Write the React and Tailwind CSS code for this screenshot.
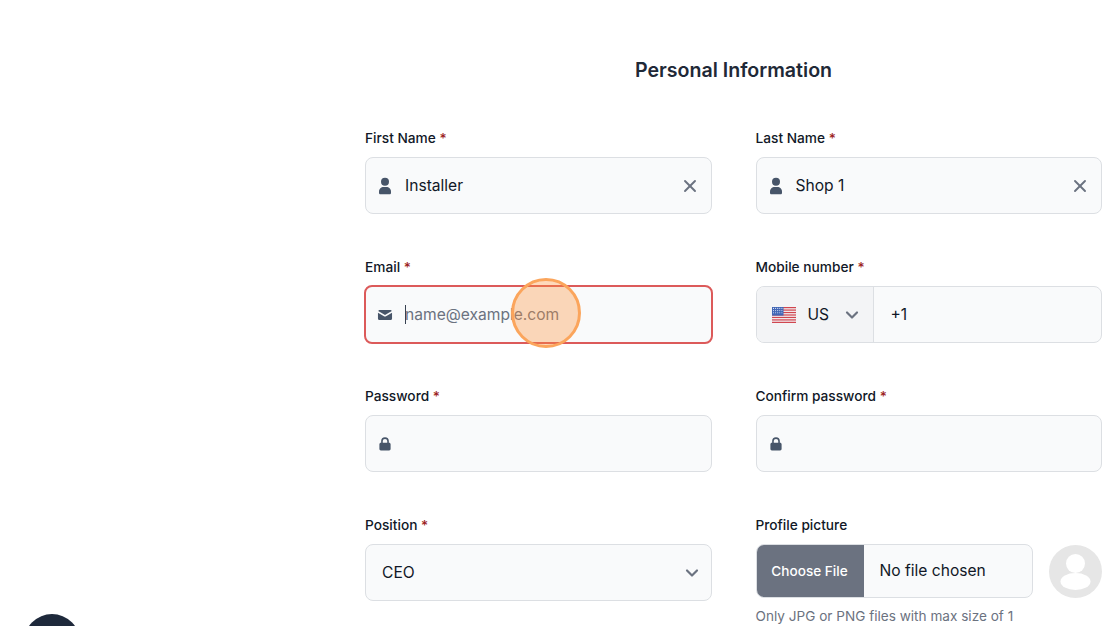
import React from 'react';
import { X, ChevronDown } from 'lucide-react';

const UserIcon = () => (
  <svg viewBox="0 0 20 20" className="w-[20px] h-[20px] fill-[#475569]">
    <path d="M10 1.8a4 4 0 1 0 0 8 4 4 0 0 0 0-8Z" />
    <path d="M8.6 11h2.8c2.5 0 4.6 2 4.6 4.5v1.400c0 .8-.7 1.300-1.400 1.300H5.400c-.7 0-1.400-.5-1.400-1.300v-1.400C4 13 6.100 11 8.600 11Z" />
  </svg>
);

const MailIcon = () => (
  <svg viewBox="0 0 20 20" className="w-[16px] h-[16px] fill-[#475569]">
    <path d="M3.6 3.6h12.8c1 0 1.8.6 2.1 1.4L10 9.9 1.5 5c.3-.8 1.1-1.4 2.1-1.4Z" />
    <path d="M1.2 7.2v7.2c0 1.1.9 2 2 2h13.6c1.1 0 2-.9 2-2V7.2l-8.1 4.6c-.4.2-1 .2-1.4 0L1.2 7.2Z" />
  </svg>
);

const LockIcon = () => (
  <svg viewBox="0 0 20 20" className="w-[16px] h-[16px] fill-[#475569]">
    <path d="M10 1.6a4.8 4.8 0 0 0-4.8 4.8v2h-.4c-1 0-1.8.8-1.8 1.8v6.2c0 1 .8 1.8 1.8 1.8h10.400c1 0 1.800-.8 1.800-1.800v-6.200c0-1-.8-1.800-1.800-1.800h-.4v-2A4.800 4.800 0 0 0 10 1.600Zm2.800 6.800H7.200v-2a2.800 2.800 0 0 1 5.600 0v2Z" />
  </svg>
);

const UsFlag = () => (
  <svg viewBox="0 0 24 16" className="w-[24px] h-[16px] shrink-0">
    <rect width="24" height="16" fill="#f3f4f6" />
    {[0, 2.46, 4.92, 7.38, 9.84, 12.3, 14.76].map((y) => (
      <rect key={y} y={y} width="24" height="1.23" fill="#d0454f" />
    ))}
    <rect width="11.5" height="8.6" fill="#4166b5" />
    {[1.4, 3.6, 5.8].map((y) =>
      [1.5, 3.6, 5.7, 7.8, 9.9].map((x) => (
        <circle key={`${x}-${y}`} cx={x} cy={y} r="0.55" fill="#dbe4f5" />
      ))
    )}
  </svg>
);

const Label = ({ text, required = true }) => (
  <label className="block h-[19px] mb-[9px] text-[13.7px] leading-[19px] font-medium text-[#111827]">
    {text}
    {required && <span className="text-[#9b1c1c]"> *</span>}
  </label>
);

const IconInput = ({ icon, value, placeholder, clearable, error, caret }) => (
  <div
    className={`relative flex items-center rounded-lg bg-[#f9fafb] pl-[9px] pr-[11px] ${
      error ? 'h-[59px] border-2 border-[#dc5a5a] -mx-px -my-px' : 'h-[57px] border border-[#dcdfe3]'
    }`}
  >
    <span className="flex w-[20px] justify-center shrink-0">{icon}</span>
    <input
      readOnly
      value={value || ''}
      placeholder={placeholder}
      className="flex-1 min-w-0 ml-[10px] bg-transparent text-[15.6px] text-[#111827] placeholder:text-[#6b7280] outline-none"
    />
    {caret && <span className="absolute left-[39px] top-[18px] w-px h-[19px] bg-[#374151]" />}
    {clearable && <X size={20} strokeWidth={2.3} className="text-[#6b7280] shrink-0" />}
  </div>
);

export default function App() {
  return (
    <div
      className="relative h-[626px] overflow-hidden bg-white pt-[56px] pl-[365px] pr-[18px]"
      style={{ fontFamily: 'Inter, sans-serif' }}
    >
      <h2 className="mb-[45px] text-center text-[19.6px] leading-[28px] font-semibold text-[#1f2937]">
        Personal Information
      </h2>

      <div className="grid grid-cols-2 gap-x-[44px] gap-y-[44px]">
        <div>
          <Label text="First Name" />
          <IconInput icon={<UserIcon />} value="Installer" clearable />
        </div>
        <div>
          <Label text="Last Name" />
          <IconInput icon={<UserIcon />} value="Shop 1" clearable />
        </div>

        <div>
          <Label text="Email" />
          <IconInput icon={<MailIcon />} placeholder="name@example.com" error caret />
        </div>
        <div>
          <Label text="Mobile number" />
          <div className="flex h-[57px] rounded-lg border border-[#dcdfe3] bg-[#f9fafb] overflow-hidden">
            <div className="flex items-center w-[117px] pl-[15px] bg-[#f3f4f6] border-r border-[#dcdfe3]">
              <UsFlag />
              <span className="ml-[12px] text-[15.6px] text-[#111827]">US</span>
              <ChevronDown size={20} strokeWidth={2.6} className="ml-[13px] text-[#6b7280]" />
            </div>
            <input
              readOnly
              value="+1"
              className="flex-1 min-w-0 pl-[17px] bg-transparent text-[15.6px] text-[#111827] outline-none"
            />
          </div>
        </div>

        <div>
          <Label text="Password" />
          <IconInput icon={<LockIcon />} />
        </div>
        <div>
          <Label text="Confirm password" />
          <IconInput icon={<LockIcon />} />
        </div>

        <div>
          <Label text="Position" />
          <div className="flex items-center justify-between h-[57px] rounded-lg border border-[#dcdfe3] bg-[#f9fafb] pl-[16px] pr-[9px]">
            <span className="text-[15.6px] text-[#111827]">CEO</span>
            <ChevronDown size={20} strokeWidth={2.6} className="text-[#6b7280]" />
          </div>
        </div>
        <div>
          <Label text="Profile picture" required={false} />
          <div className="flex items-center gap-[16px]">
            <div className="flex flex-1 h-[54px] rounded-lg border border-[#dcdfe3] bg-[#f9fafb] overflow-hidden">
              <button className="w-[108px] -ml-px bg-[#6b7280] text-[13.6px] font-medium text-white">
                Choose File
              </button>
              <span className="flex items-center pl-[16px] text-[15.6px] text-[#111827]">
                No file chosen
              </span>
            </div>
            <svg viewBox="0 0 53 53" className="w-[53px] h-[53px] shrink-0">
              <circle cx="26.5" cy="26.5" r="26.5" fill="#e6e6e6" />
              <circle cx="26.5" cy="18.5" r="9.5" fill="#fff" />
              <ellipse cx="26.5" cy="36.5" rx="15" ry="8.5" fill="#fff" />
            </svg>
          </div>
          <p className="mt-[8px] text-[13.6px] leading-[20px] text-[#6b7280] whitespace-nowrap">
            Only JPG or PNG files with max size of 1
          </p>
        </div>
      </div>

      {/* click highlight */}
      <div className="absolute left-[511px] top-[278px] w-[70px] h-[70px] rounded-full border-[3px] border-[#fba55c] bg-[#fb923c]/35" />
      {/* chat bubble, cut off by the window */}
      <div className="absolute left-[24px] top-[614px] w-[56px] h-[56px] rounded-full bg-[#1e293b]" />
    </div>
  );
}
